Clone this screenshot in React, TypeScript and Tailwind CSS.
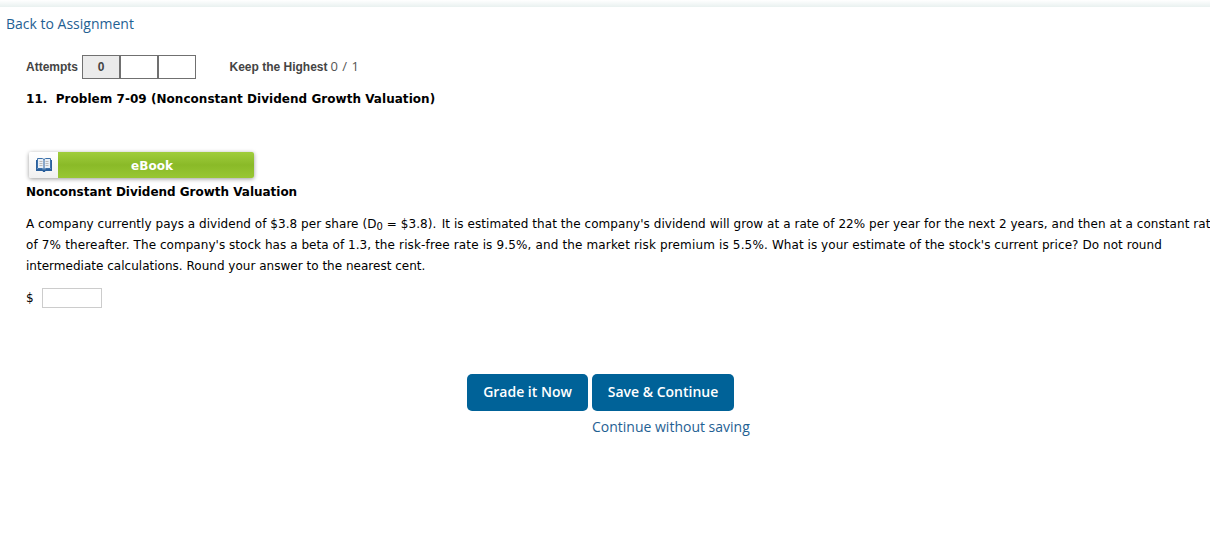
import React from 'react';

const ATTEMPTS = ['0', '', ''];

const BookIcon: React.FC = () => (
  <svg className="w-[16px] h-[14px]" viewBox="0 0 16 14" fill="none">
    <path d="M0 2h1v9h5.5l1 1h1l1-1H15V2h1v11H9.5l-.7 1H7.2l-.7-1H0z" fill="#2b609c" />
    <path d="M1.5.5h5L8 1.5 9.5.5h5v10h-5L8 11.5l-1.5-1h-5z" fill="#e9eff6" stroke="#3a70aa" />
    <path d="M8 1.5v10.5" stroke="#2b609c" />
    <path d="M3.5 3.5h3M3.5 5.5h3M3.5 7.5h3M9.5 3.5h3M9.5 5.5h3M9.5 7.5h3" stroke="#bbb9b8" />
  </svg>
);

const AttemptsBar: React.FC = () => (
  <div className="flex items-center h-[24px] mt-[21px] ml-[26px] text-[12px] text-[#444] font-bold font-['Liberation_Sans',Arial,sans-serif]">
    <span className="w-[56px]">Attempts</span>
    <div className="flex h-[24px]">
      {ATTEMPTS.map((score, i) => (
        <div
          key={i}
          className={`w-[38px] h-full flex items-center justify-center border border-[#707070] ${i === 0 ? 'bg-[#ebebeb]' : ''}`}
        >
          {score}
        </div>
      ))}
    </div>
    <span className="ml-[33.5px]">Keep the Highest</span>
    <span className="ml-[3px] text-[13px] tracking-[0.5px] text-[#555] font-normal font-['Open_Sans',sans-serif]">0 / 1</span>
  </div>
);

const EbookButton: React.FC = () => (
  <button className="flex w-[225px] h-[26px] mt-[43px] ml-[29px] rounded-[2px] overflow-hidden shadow-[0_1px_4px_rgba(0,0,0,0.4)]">
    <span className="w-[29px] h-full pl-[1px] flex items-center justify-center bg-linear-to-b from-white to-[#f0f0f0]">
      <BookIcon />
    </span>
    <span className="flex-1 h-full pr-[8px] pt-px flex items-center justify-center bg-linear-to-b from-[#a0cd3c] via-[#8aba28] to-[#98c733] text-white text-[12px] font-bold">
      eBook
    </span>
  </button>
);

const Question: React.FC = () => (
  <div className="mt-[4px] ml-[26px] text-[12px] leading-[21px] text-black whitespace-nowrap">
    <h2 className="font-bold tracking-[-0.02px]">Nonconstant Dividend Growth Valuation</h2>
    <div className="mt-[11px]">
      <p>
        <span className="tracking-[0.04px]">A company currently pays a dividend of $3.8 per </span>
        <span className="tracking-[0.06px]">
          share (D<span className="text-[10px] relative top-[2px] leading-none">0</span> = $3.8).{' '}
        </span>
        <span className="pl-[1.5px] tracking-[0.055px]">
          It is estimated that the company's dividend will grow at a rate of 22% per year for the next 2 years, and then at a constant rate
        </span>
      </p>
      <p>
        <span className="tracking-[0.15px]">of 7% thereafter. </span>
        <span className="tracking-[0.045px]">The company's stock has a beta of 1.3, </span>
        <span className="tracking-[0.14px]">the risk-free rate is 9.5%, </span>
        <span className="tracking-[0.15px]">and the market risk premium is 5.5%. </span>
        <span className="tracking-[0.06px]">What is your estimate of the stock's current price? Do not round</span>
      </p>
      <p className="tracking-[0.015px]">intermediate calculations. Round your answer to the nearest cent.</p>
    </div>
    <label className="flex items-center mt-[11px] h-[20px]">
      <span className="w-[16px]">$</span>
      <input type="text" className="w-[60px] h-[20px] px-1 border border-[#ccc] bg-white" />
    </label>
  </div>
);

export default function App() {
  return (
    <div className="w-full h-[554px] overflow-hidden bg-white font-['DejaVu_Sans',Verdana,sans-serif]">
      <div className="h-[7px] bg-linear-to-b from-white to-[#e9f1f0]" />
      <a className="block w-fit mt-[7px] ml-[6px] text-[14px] leading-[20px] text-[#1f6193] font-['Open_Sans',sans-serif]">
        Back to Assignment
      </a>
      <AttemptsBar />
      <h1 className="mt-[11px] ml-[26px] text-[12px] leading-[19px] font-bold whitespace-pre tracking-[0.035px]">
        11.  Problem 7-09 (Nonconstant Dividend Growth Valuation)
      </h1>
      <EbookButton />
      <Question />
      <div className="flex gap-[4px] mt-[66px] ml-[467px] text-[14px] font-['Open_Sans',sans-serif]">
        <button className="w-[121px] h-[37px] pb-[2px] rounded-[5px] bg-[#006298] text-white font-semibold">Grade it Now</button>
        <button className="w-[142px] h-[37px] pb-[2px] rounded-[5px] bg-[#006298] text-white font-semibold">Save &amp; Continue</button>
      </div>
      <a className="block w-fit mt-[6px] ml-[592px] text-[14px] leading-[20px] text-[#1f6193] font-['Open_Sans',sans-serif]">
        Continue without saving
      </a>
    </div>
  );
}
